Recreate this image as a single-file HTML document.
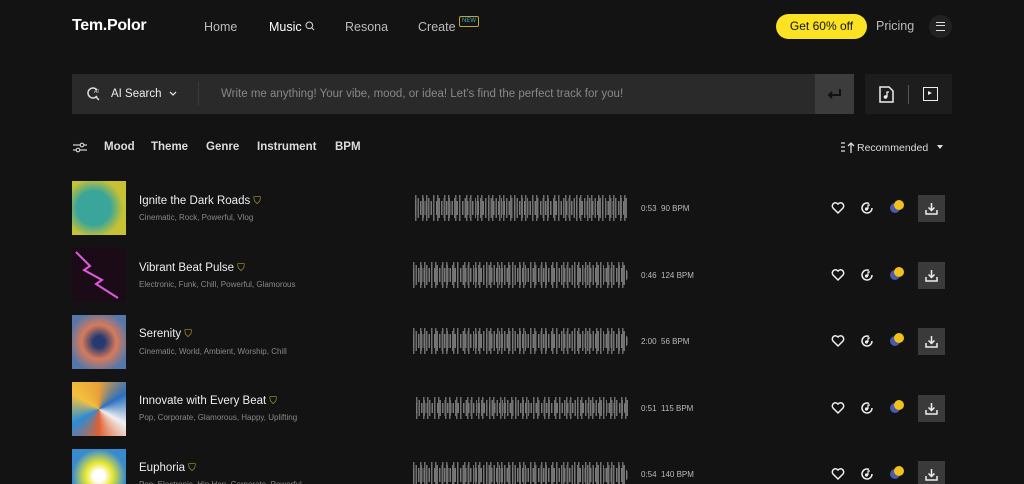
<!DOCTYPE html>
<html><head><meta charset="utf-8"><style>
*{margin:0;padding:0;box-sizing:border-box}
html,body{width:1024px;height:484px;overflow:hidden}
body{background:#131313;font-family:"Liberation Sans",sans-serif;color:#ddd;position:relative}
.a{position:absolute}
.nav{font-size:12.5px;color:#bbb;top:20px}
.wave{position:absolute;height:26px;background:repeating-linear-gradient(90deg,#6e6e6e 0 1.4px,transparent 1.4px 7px,#6e6e6e 7px 8.4px,transparent 8.4px 11px);}
.wave:before{content:"";position:absolute;left:0;right:0;top:6px;bottom:6px;background:repeating-linear-gradient(90deg,#7a7a7a 0 1.5px,transparent 1.5px 2.6px);border-radius:0 6px 6px 0}
.wave:after{content:"";position:absolute;left:0;right:0;top:3px;bottom:3px;background:repeating-linear-gradient(90deg,transparent 0 2.6px,#727272 2.6px 4px,transparent 4px 5.2px)}
.row .t{position:absolute;left:139px;font-size:11.5px;color:#eee}
.row .s{position:absolute;left:139px;font-size:8px;color:#888}
</style></head><body>
<div class="a" style="left:72px;top:17px;font-size:16px;font-weight:bold;color:#fff;letter-spacing:-0.3px">Tem.Polor</div>
<div class="a nav" style="left:204px">Home</div>
<div class="a nav" style="left:269px;color:#fff">Music <svg width="10" height="10" viewBox="0 0 10 10"><circle cx="4.3" cy="4.3" r="3.3" stroke="#ccc" fill="none" stroke-width="1.1"/><path d="M6.8 6.8L9 9" stroke="#ccc" stroke-width="1.1"/></svg></div>
<div class="a nav" style="left:345px">Resona</div>
<div class="a nav" style="left:418px">Create</div>
<div class="a" style="left:459px;top:16px;font-size:6px;color:#4ab;border:1px solid #b9a838;border-radius:2px;padding:0 2px;line-height:9px">NEW</div>
<div class="a" style="left:776px;top:14px;width:91px;height:25px;background:#fbe324;border-radius:13px;color:#111;font-size:12px;text-align:center;line-height:25px">Get 60% off</div>
<div class="a" style="left:876px;top:19px;font-size:12.5px;color:#bbb">Pricing</div>
<div class="a" style="left:929px;top:15px;width:23px;height:23px;border-radius:50%;background:#222"><div style="position:absolute;left:7px;top:7px;width:9px;height:9px;border-top:1.5px solid #ddd;border-bottom:1.5px solid #ddd"><div style="margin-top:2.3px;border-top:1.5px solid #ddd"></div></div></div>

<div class="a" style="left:72px;top:74px;width:782px;height:40px;background:#2a2a2a"></div>
<div class="a" style="left:815px;top:74px;width:39px;height:40px;background:#3c3c3c"><svg style="position:absolute;left:12px;top:14px" width="15" height="12" viewBox="0 0 15 12"><path d="M13 1V7H2M5 4L2 7 5 10" fill="none" stroke="#111" stroke-width="2"/></svg></div>
<svg class="a" style="left:86px;top:86px" width="15" height="15" viewBox="0 0 15 15"><path d="M11 4A5 5 0 1 0 11 10" fill="none" stroke="#ddd" stroke-width="1.5"/><path d="M10 11L13 14" stroke="#ddd" stroke-width="1.5"/><text x="8" y="7" font-size="5" fill="#ddd" font-family="Liberation Sans">AI</text></svg>
<div class="a" style="left:111px;top:88px;font-size:11.5px;color:#eee">AI Search</div>
<svg class="a" style="left:169px;top:91px" width="8" height="6" viewBox="0 0 8 6"><path d="M1 1L4 4 7 1" fill="none" stroke="#ddd" stroke-width="1.3"/></svg>
<div class="a" style="left:198px;top:82px;width:1px;height:24px;background:#3a3a3a"></div>
<div class="a" style="left:221px;top:88px;font-size:11.5px;color:#888">Write me anything! Your vibe, mood, or idea! Let's find the perfect track for you!</div>
<div class="a" style="left:865px;top:74px;width:87px;height:40px;background:#1d1d1d"></div>
<svg class="a" style="left:879px;top:86px" width="15" height="17" viewBox="0 0 15 17"><path d="M1 1H10L14 5V16H1Z" fill="none" stroke="#eee" stroke-width="1.5"/><circle cx="6.5" cy="11" r="1.8" fill="#eee"/><path d="M8 11V6H10" stroke="#eee" stroke-width="1.3" fill="none"/></svg>
<div class="a" style="left:908px;top:85px;width:1px;height:19px;background:#555"></div>
<div class="a" style="left:923px;top:87px;width:15px;height:14px;border:1.5px solid #eee"><div style="position:absolute;left:4px;top:3px;border-left:4px solid #eee;border-top:2.5px solid transparent;border-bottom:2.5px solid transparent"></div></div>

<svg class="a" style="left:73px;top:142px" width="14" height="11" viewBox="0 0 14 11"><path d="M0 3H14M0 8H14" stroke="#ccc" stroke-width="1.3"/><circle cx="9" cy="3" r="1.8" fill="#131313" stroke="#ccc" stroke-width="1.2"/><circle cx="5" cy="8" r="1.8" fill="#131313" stroke="#ccc" stroke-width="1.2"/></svg>
<div class="a" style="left:104px;top:141px;font-size:11.5px;color:#ddd;font-weight:bold;word-spacing:1px">Mood</div>
<div class="a" style="left:151px;top:141px;font-size:11.5px;color:#ddd;font-weight:bold">Theme</div>
<div class="a" style="left:206px;top:141px;font-size:11.5px;color:#ddd;font-weight:bold">Genre</div>
<div class="a" style="left:257px;top:141px;font-size:11.5px;color:#ddd;font-weight:bold">Instrument</div>
<div class="a" style="left:335px;top:141px;font-size:11.5px;color:#ddd;font-weight:bold">BPM</div>
<svg class="a" style="left:841px;top:142px" width="14" height="11" viewBox="0 0 14 11"><path d="M0 1H4M0 5H4M0 9H4M10 11V1M7 4L10 1 13 4" stroke="#ddd" stroke-width="1.3" fill="none"/></svg>
<div class="a" style="left:857px;top:142px;font-size:10.5px;color:#ddd">Recommended</div>
<div class="a" style="left:937px;top:145px;border-top:4px solid #ddd;border-left:3.5px solid transparent;border-right:3.5px solid transparent"></div>

<div class="row">
<div class="a" style="left:72px;top:181px;width:54px;height:54px;background:radial-gradient(circle at 40% 50%,#3aa59a 0 40%,#c6c233 70%)"></div>
<div class="t" style="top:195px">Ignite the Dark Roads <span style="color:#cdbb2e;font-size:10px">⛉</span></div>
<div class="s" style="top:213px">Cinematic, Rock, Powerful, Vlog</div>

<div class="a" style="left:72px;top:248px;width:54px;height:54px;background:#1a0b16;overflow:hidden"><svg width="54" height="54"><path d="M4 4L18 18 12 22 30 32 24 36 46 50" stroke="#e05ae0" stroke-width="2" fill="none"/></svg></div>
<div class="t" style="top:262px">Vibrant Beat Pulse <span style="color:#cdbb2e;font-size:10px">⛉</span></div>
<div class="s" style="top:280px">Electronic, Funk, Chill, Powerful, Glamorous</div>

<div class="a" style="left:72px;top:315px;width:54px;height:54px;background:radial-gradient(circle at 50% 50%,#243a70 0 15%,#d77a5a 45%,#5577aa 80%)"></div>
<div class="t" style="top:328px">Serenity <span style="color:#cdbb2e;font-size:10px">⛉</span></div>
<div class="s" style="top:347px">Cinematic, World, Ambient, Worship, Chill</div>

<div class="a" style="left:72px;top:382px;width:54px;height:54px;background:conic-gradient(#e8a038,#2a70c0,#f0f0f0,#e06030,#2a8cd8,#f4c040,#e8a038)"></div>
<div class="t" style="top:395px">Innovate with Every Beat <span style="color:#cdbb2e;font-size:10px">⛉</span></div>
<div class="s" style="top:413px">Pop, Corporate, Glamorous, Happy, Uplifting</div>

<div class="a" style="left:72px;top:449px;width:54px;height:54px;background:radial-gradient(circle,#fff 0 15%,#e8e830 35%,#3a8ad0 70%)"></div>
<div class="t" style="top:462px">Euphoria <span style="color:#cdbb2e;font-size:10px">⛉</span></div>
<div class="s" style="top:480px">Pop, Electronic, Hip Hop, Corporate, Powerful</div>
</div>

<div class="wave" style="left:415px;top:195px;width:213px"></div>
<div class="wave" style="left:413px;top:262px;width:215px"></div>
<div class="wave" style="left:413px;top:328px;width:215px"></div>
<div class="wave" style="left:416px;top:397px;width:212px;height:22px"></div>
<div class="wave" style="left:413px;top:462px;width:215px"></div>

<div class="a" style="left:641px;top:204px;font-size:8px;color:#bbb">0:53 &nbsp;90 BPM</div>
<div class="a" style="left:641px;top:271px;font-size:8px;color:#bbb">0:46 &nbsp;124 BPM</div>
<div class="a" style="left:641px;top:337px;font-size:8px;color:#bbb">2:00 &nbsp;56 BPM</div>
<div class="a" style="left:641px;top:404px;font-size:8px;color:#bbb">0:51 &nbsp;115 BPM</div>
<div class="a" style="left:641px;top:470px;font-size:8px;color:#bbb">0:54 &nbsp;140 BPM</div>

<div id="icons"></div>
<script>
var ys=[208,275,341,408,474],h="";
ys.forEach(function(y){
h+='<svg class="a" style="left:831px;top:'+(y-7)+'px" width="14" height="14" viewBox="0 0 14 14"><path d="M7 12L2 7A3 3 0 0 1 7 3A3 3 0 0 1 12 7Z" fill="none" stroke="#eee" stroke-width="1.5"/></svg>';
h+='<svg class="a" style="left:860px;top:'+(y-7)+'px" width="14" height="14" viewBox="0 0 14 14"><path d="M12 7A5 5 0 1 1 9 2.4" fill="none" stroke="#eee" stroke-width="1.5"/><circle cx="6.5" cy="8" r="1.6" fill="#eee"/><path d="M8 8V4h2" stroke="#eee" stroke-width="1.2" fill="none"/></svg>';
h+='<div class="a" style="left:890px;top:'+(y-5)+'px;width:10px;height:10px;border-radius:50%;background:#4a5aa8"></div><div class="a" style="left:894px;top:'+(y-8)+'px;width:10px;height:10px;border-radius:50%;background:#f2c21c"></div>';
h+='<div class="a" style="left:918px;top:'+(y-13)+'px;width:27px;height:27px;background:#3a3a3a"><svg style="position:absolute;left:7px;top:7px" width="13" height="13" viewBox="0 0 13 13"><path d="M6.5 1V8M3.5 5.5L6.5 8.5 9.5 5.5M1 8V12H12V8" fill="none" stroke="#eee" stroke-width="1.5"/></svg></div>';
});
document.getElementById("icons").innerHTML=h;
</script>
</body></html>
